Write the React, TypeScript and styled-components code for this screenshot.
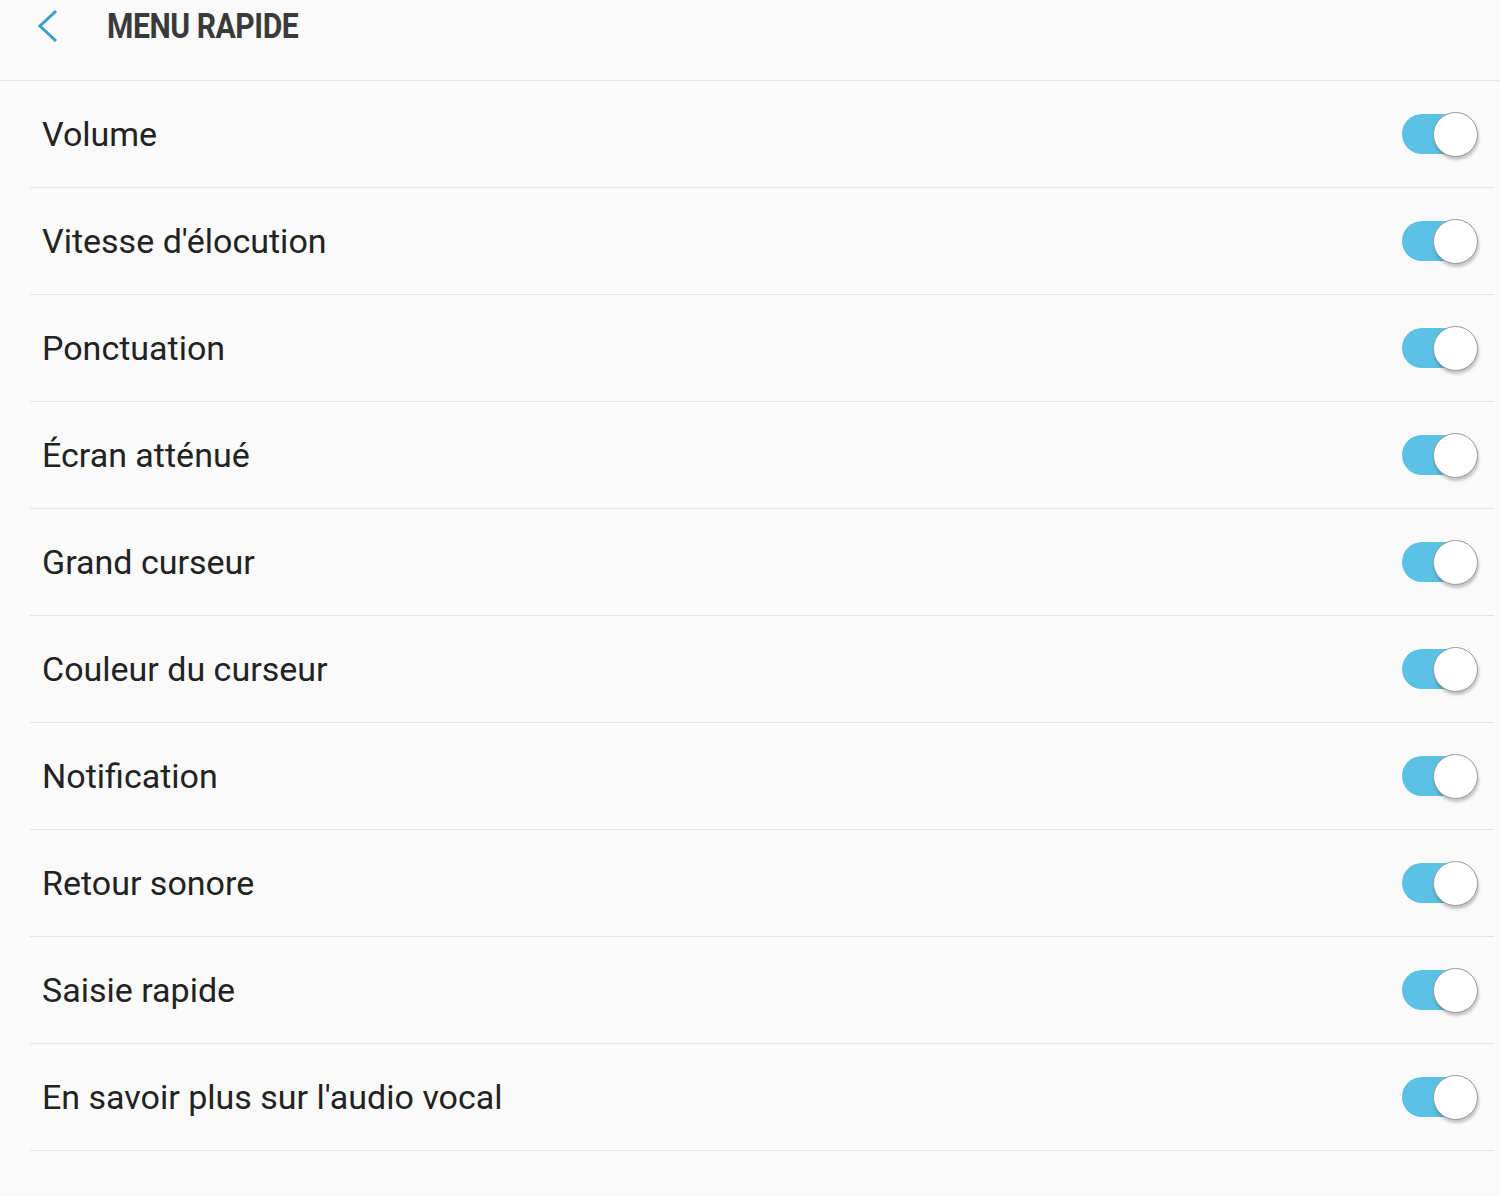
import React, { useState } from 'react';
import styled, { createGlobalStyle } from 'styled-components';

const GlobalStyle = createGlobalStyle`
    html, body {
        margin: 0;
        padding: 0;
        background: #fafafa;
    }
    * {
        box-sizing: border-box;
    }
`;

const Page = styled.div`
    width: 1500px;
    min-height: 1196px;
    background: #fafafa;
    font-family: Roboto, 'Noto Sans', sans-serif;
`;

/* 상단 헤더 */
const Header = styled.header`
    height: 81px;
    display: flex;
    align-items: flex-start;
    border-bottom: 1px solid #e3e3e3;
`;

const BackButton = styled.button`
    width: 60px;
    height: 52px;
    margin-left: 37px;
    padding: 0;
    border: none;
    background: none;
    display: flex;
    align-items: center;
    justify-content: flex-start;
    cursor: pointer;
`;

const Title = styled.h1`
    margin: 0 0 0 10px;
    padding-top: 5px;
    font-size: 35px;
    font-weight: 700;
    color: #3a3a3a;
    letter-spacing: -0.5px;
    transform: scaleX(0.86);
    transform-origin: left center;
    line-height: 44px;
`;

/* 목록 */
const List = styled.ul`
    list-style: none;
    margin: 0;
    padding: 0 6px 0 30px;
`;

const Row = styled.li`
    height: 107px;
    display: flex;
    align-items: center;
    justify-content: space-between;
    border-bottom: 1px solid #e3e3e3;
    padding: 0 18px 0 12px;
`;

const Label = styled.span`
    font-size: 34px;
    color: #222;
    padding-bottom: 1px;
`;

const Switch = styled.button<{ on: boolean }>`
    position: relative;
    width: 74px;
    height: 44px;
    padding: 0;
    border: none;
    background: none;
    cursor: pointer;

    &::before {
        content: '';
        position: absolute;
        left: 0;
        top: 2px;
        width: 66px;
        height: 40px;
        border-radius: 20px;
        background: ${props => (props.on ? '#5bc1e5' : '#c9c9c9')};
    }

    &::after {
        content: '';
        position: absolute;
        top: 0;
        left: ${props => (props.on ? '31px' : '0')};
        width: 43px;
        height: 43px;
        border-radius: 50%;
        background: #fff;
        border: 1.5px solid #9a9a9a;
        box-shadow: 1px 3px 3px rgba(0, 0, 0, 0.22);
    }
`;

const items = [
    'Volume',
    "Vitesse d'élocution",
    'Ponctuation',
    'Écran atténué',
    'Grand curseur',
    'Couleur du curseur',
    'Notification',
    'Retour sonore',
    'Saisie rapide',
    "En savoir plus sur l'audio vocal",
];

const App = () => {
    const [state, setState] = useState<boolean[]>(items.map(() => true));

    const toggle = (i: number) =>
        setState(prev => prev.map((v, j) => (j === i ? !v : v)));

    return (
        <Page>
            <GlobalStyle />
            <Header>
                <BackButton aria-label="Retour">
                    <svg width="22" height="34" viewBox="0 0 22 34">
                        <polyline
                            points="19,2 3,17 19,32"
                            fill="none"
                            stroke="#3b9ec6"
                            strokeWidth="3"
                        />
                    </svg>
                </BackButton>
                <Title>MENU RAPIDE</Title>
            </Header>
            <List>
                {items.map((label, i) => (
                    <Row key={label}>
                        <Label>{label}</Label>
                        <Switch
                            on={state[i]}
                            onClick={() => toggle(i)}
                            aria-label={label}
                        />
                    </Row>
                ))}
            </List>
        </Page>
    );
};

export default App;
